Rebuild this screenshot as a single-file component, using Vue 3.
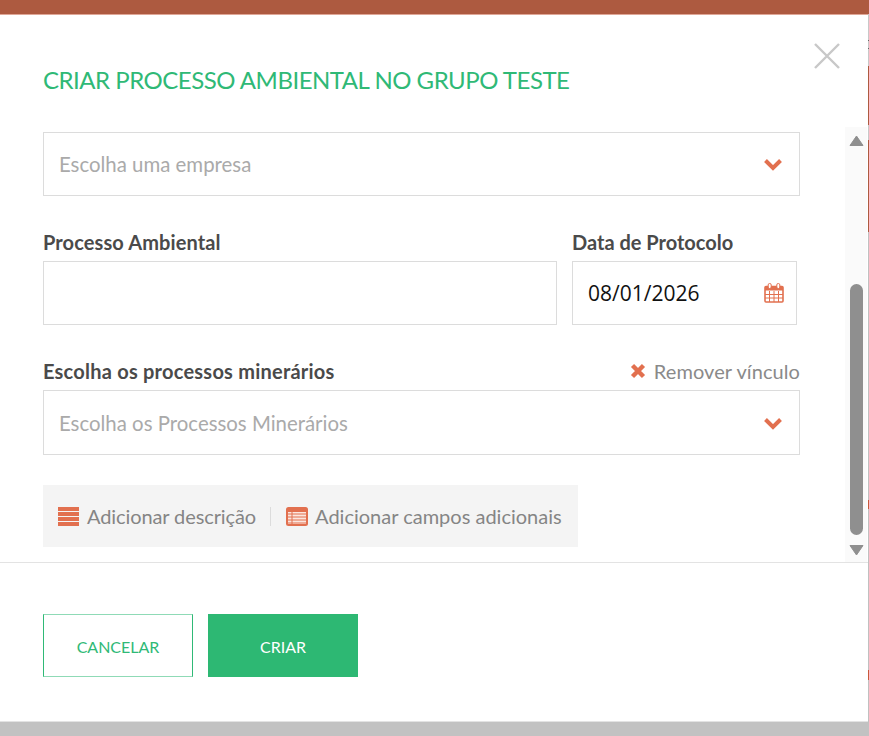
<script setup>
const gridLines = [3, 6, 9, 12]
</script>

<template>
  <div class="page">
    <div class="topbar"></div>
    <div class="shell">
      <div class="modal">
        <header class="modal-head">
          <h1 class="title">CRIAR PROCESSO AMBIENTAL NO GRUPO TESTE</h1>
          <button class="close" aria-label="Fechar">
            <svg width="26" height="26" viewBox="0 0 26 26">
              <path d="M1 1L25 25M25 1L1 25" stroke="#c8c8c8" stroke-width="2.4" fill="none" />
            </svg>
          </button>
        </header>

        <div class="body">
          <form class="form" @submit.prevent>
            <div class="select">
              <span class="placeholder">Escolha uma empresa</span>
              <svg class="chevron" width="20" height="13" viewBox="0 0 20 13">
                <path d="M2.5 2.5L10 10L17.5 2.5" stroke="#e2704f" stroke-width="4" fill="none" />
              </svg>
            </div>

            <div class="row">
              <div class="field grow">
                <label class="label">Processo Ambiental</label>
                <input class="input" type="text" />
              </div>
              <div class="field date">
                <label class="label">Data de Protocolo</label>
                <div class="input date-box">
                  <span class="date-value">08/01/2026</span>
                  <svg width="20" height="20" viewBox="0 0 20 20">
                    <rect x="1" y="3.5" width="18" height="15.5" rx="1" fill="none" stroke="#e2704f" stroke-width="1.6" />
                    <rect x="1" y="3.5" width="18" height="4" fill="#e2704f" />
                    <rect x="4.2" y="0.5" width="3" height="5" rx="1.4" fill="#fff" stroke="#e2704f" />
                    <rect x="12.8" y="0.5" width="3" height="5" rx="1.4" fill="#fff" stroke="#e2704f" />
                    <path d="M5.5 8V19M10 8V19M14.5 8V19M1 11.5H19M1 15H19" stroke="#e2704f" stroke-width="1" fill="none" />
                  </svg>
                </div>
              </div>
            </div>

            <div class="label-row">
              <label class="label wide">Escolha os processos minerários</label>
              <a class="remove">
                <svg width="16" height="16" viewBox="0 0 16 16">
                  <path d="M2.5 2.5L13.5 13.5M13.5 2.5L2.5 13.5" stroke="#e2704f" stroke-width="4.4" fill="none" />
                </svg>
                Remover vínculo
              </a>
            </div>
            <div class="select tall">
              <span class="placeholder">Escolha os Processos Minerários</span>
              <svg class="chevron" width="20" height="13" viewBox="0 0 20 13">
                <path d="M2.5 2.5L10 10L17.5 2.5" stroke="#e2704f" stroke-width="4" fill="none" />
              </svg>
            </div>

            <div class="extras">
              <a class="extra desc">
                <svg width="21" height="19" viewBox="0 0 21 19">
                  <path d="M0 0h21v4H0zM0 5h21v4H0zM0 10h21v4H0zM0 15h21v4H0z" fill="#e2704f" />
                </svg>
                Adicionar descrição
              </a>
              <span class="divider"></span>
              <a class="extra">
                <svg width="22" height="19" viewBox="0 0 22 19">
                  <rect width="22" height="19" rx="2.5" fill="#e2704f" />
                  <rect x="2" y="5" width="18" height="12" fill="#fbe6df" />
                  <path v-for="y in gridLines" :key="y" :d="`M2 ${y + 4}H20`" stroke="#e2704f" stroke-width="1" />
                  <path d="M6 5V17" stroke="#e2704f" stroke-width="1" />
                </svg>
                Adicionar campos adicionais
              </a>
            </div>
          </form>

          <div class="scrollbar">
            <svg class="arrow up" width="15" height="11" viewBox="0 0 15 11">
              <path d="M7.5 1L14 10.5H1Z" fill="#8f8f8f" stroke="#8f8f8f" stroke-linejoin="round" />
            </svg>
            <div class="thumb"></div>
            <svg class="arrow down" width="15" height="11" viewBox="0 0 15 11">
              <path d="M7.5 10L14 0.5H1Z" fill="#8f8f8f" stroke="#8f8f8f" stroke-linejoin="round" />
            </svg>
          </div>
        </div>

        <footer class="modal-foot">
          <button class="btn ghost">CANCELAR</button>
          <button class="btn solid">CRIAR</button>
        </footer>
      </div>
      <div class="edge"></div>
    </div>
    <div class="backdrop"></div>
  </div>
</template>

<style scoped>
* {
  box-sizing: border-box;
}

.page {
  width: 869px;
  height: 736px;
  display: flex;
  flex-direction: column;
  overflow: hidden;
  background: #c2c2c2;
  font-family: Lato, "Open Sans", sans-serif;
}

.topbar {
  height: 14px;
  flex: none;
  background: #ad5a40;
}

.shell {
  display: flex;
  height: 708px;
  flex: none;
}

.modal {
  width: 868px;
  display: flex;
  flex-direction: column;
  background: #fff;
  border-top: 1px solid #dfa797;
  border-bottom: 1px solid #e3e3e3;
}

.edge {
  width: 1px;
  background: linear-gradient(
    #c8c8c8 0 26px, #666 26px 27px, #c8c8c8 27px 34px, #666 34px 35px, #c8c8c8 35px 52px,
    #ad5a40 52px 111px, #c8c8c8 111px 126px, #ad5a40 126px 218px, #c0c0c0 218px 486px,
    #c8593c 486px 495px, #c0c0c0 495px 656px, #c8593c 656px 666px, #c0c0c0 666px
  );
}

.backdrop {
  flex: 1;
}

.modal-head {
  height: 112px;
  flex: none;
  display: flex;
  justify-content: space-between;
  padding: 28px 28px 0 43px;
}

.title {
  margin: 21px 0 0;
  height: 32px;
  font-size: 24px;
  line-height: 32px;
  font-weight: 400;
  letter-spacing: -0.49px;
  color: #2fb976;
}

.close {
  width: 26px;
  height: 26px;
  padding: 0;
  border: 0;
  background: none;
}

.body {
  height: 436px;
  flex: none;
  display: flex;
  justify-content: space-between;
  border-bottom: 1px solid #e3e3e3;
}

.form {
  width: 800px;
  padding: 5px 0 0 43px;
}

.select {
  height: 64px;
  display: flex;
  align-items: center;
  justify-content: space-between;
  padding: 1px 16px 0 15px;
  border: 1px solid #dcdcdc;
}

.select.tall {
  height: 65px;
}

.placeholder {
  margin-top: -1px;
  font-size: 20.4px;
  color: #aaa;
}

.row {
  display: flex;
  gap: 15px;
  margin-top: 33px;
}

.field {
  display: flex;
  flex-direction: column;
}

.grow {
  width: 514px;
}

.grow .label {
  letter-spacing: 0.1px;
}

.date {
  width: 225px;
}

.label {
  height: 32px;
  font-size: 20px;
  line-height: 26px;
  font-weight: 700;
  color: #4a4a4a;
}

.label.wide {
  letter-spacing: 0.23px;
}

.input {
  height: 64px;
  width: 100%;
  border: 1px solid #dcdcdc;
  background: #fff;
}

.date-box {
  display: flex;
  align-items: center;
  justify-content: space-between;
  padding: 0 12px 0 15px;
}

.date-value {
  font-family: "Open Sans", sans-serif;
  font-size: 21px;
  color: #111;
}

.label-row {
  display: flex;
  justify-content: space-between;
  margin-top: 33px;
}

.remove {
  display: flex;
  align-items: flex-start;
  gap: 8px;
  font-size: 20px;
  line-height: 26px;
  letter-spacing: 0.07px;
  color: #8a8a8a;
}

.remove svg {
  margin-top: 5px;
}

.extras {
  width: 535px;
  height: 62px;
  margin-top: 30px;
  display: flex;
  align-items: center;
  padding-left: 15px;
  background: #f4f4f4;
}

.extra {
  display: flex;
  align-items: center;
  gap: 7px;
  font-size: 20px;
  color: #858585;
}

.extra.desc {
  gap: 8px;
  letter-spacing: -0.1px;
}

.divider {
  width: 1px;
  height: 19px;
  margin: 0 15px 0 14px;
  background: #dcdcdc;
}

.scrollbar {
  width: 22px;
  margin-right: 1px;
  display: flex;
  flex-direction: column;
  align-items: center;
  background: #fafafa;
}

.arrow {
  flex: none;
}

.arrow.up {
  margin-top: 8px;
}

.arrow.down {
  margin-bottom: 6px;
}

.thumb {
  width: 13px;
  height: 251px;
  margin-top: auto;
  margin-bottom: 10px;
  border-radius: 7px;
  background: #8f8f8f;
}

.modal-foot {
  flex: 1;
  display: flex;
  gap: 15px;
  padding: 51px 0 0 43px;
}

.btn {
  width: 150px;
  height: 63px;
  padding: 2px 0 0;
  font-family: inherit;
  font-size: 16px;
  border: 1px solid;
}

.ghost {
  border-color: #8fdab6 #2fb976;
  background: #fff;
  color: #2fb976;
}

.solid {
  border-color: #2db873;
  background: #2db873;
  color: #fff;
}
</style>

<style>
body {
  background: #c2c2c2;
}
</style>
